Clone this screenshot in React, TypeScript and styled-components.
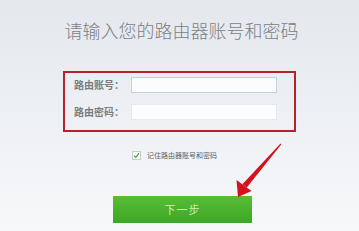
import React from 'react';
import styled, { createGlobalStyle } from 'styled-components';

const GlobalStyle = createGlobalStyle`
  html, body {
    margin: 0;
    padding: 0;
  }
  body {
    font-family: "Noto Sans CJK SC", "Noto Sans", sans-serif;
    background: #f4f6f8;
  }
`;

const Page = styled.div`
  position: relative;
  width: 359px;
  height: 231px;
  overflow: hidden;
  box-sizing: border-box;
  padding: 21px 0 0 63px;
  display: flex;
  flex-direction: column;
  align-items: flex-start;
  background: linear-gradient(180deg, #e4e8ee 0%, #eceff3 45%, #f7f8fa 100%);
`;

const Title = styled.h1`
  margin: 0;
  width: 237px;
  text-align: center;
  font-size: 18px;
  line-height: 18px;
  font-weight: 300;
  color: #7b7e83;
  white-space: nowrap;
`;

const FormBox = styled.div`
  margin-top: 32px;
  width: 233px;
  box-sizing: border-box;
  border: 2px solid #b5222c;
  padding: 4px 0 10px 9px;
  display: flex;
  flex-direction: column;
  gap: 11px;
`;

const Row = styled.div`
  display: flex;
  align-items: center;
  height: 16px;
`;

const Label = styled.span`
  width: 57px;
  font-size: 10px;
  line-height: 16px;
  font-weight: 700;
  color: #7a7d80;
  white-space: nowrap;
`;

const Input = styled.div<{ $strong?: boolean }>`
  width: 146px;
  height: 16px;
  box-sizing: border-box;
  background: #fbfcfd;
  border: 1px solid ${(p) => (p.$strong ? '#c5d0da' : '#e6eaee')};
`;

const Remember = styled.label`
  margin: 18px 0 0 69px;
  display: flex;
  align-items: center;
  gap: 6px;
  height: 10px;
  font-size: 7px;
  line-height: 10px;
  color: #5e6063;
  white-space: nowrap;
`;

const Check = styled.span`
  width: 9px;
  height: 9px;
  box-sizing: border-box;
  border: 1px solid #c6cbd0;
  background: #fff;
  display: flex;
  align-items: center;
  justify-content: center;
`;

const NextButton = styled.button`
  margin: 36px 0 0 50px;
  width: 139px;
  height: 27px;
  border: none;
  padding: 0;
  background: linear-gradient(180deg, #57bd35 0%, #47b02b 60%, #3ea626 100%);
  color: #cfeec2;
  font-family: "Noto Sans CJK SC", sans-serif;
  font-size: 11px;
  line-height: 27px;
  letter-spacing: 1px;
`;

const Arrow = styled.svg`
  position: absolute;
  left: 0;
  top: 0;
  pointer-events: none;
`;

export default function App() {
  return (
    <>
      <GlobalStyle />
      <Page>
        <Title>请输入您的路由器账号和密码</Title>
        <FormBox>
          <Row>
            <Label>路由账号：</Label>
            <Input $strong />
          </Row>
          <Row>
            <Label>路由密码：</Label>
            <Input />
          </Row>
        </FormBox>
        <Remember>
          <Check>
            <svg width="7" height="7" viewBox="0 0 7 7">
              <path d="M1 3.6 L2.8 5.4 L6 1.2" fill="none" stroke="#4a9a2e" strokeWidth="1.1" />
            </svg>
          </Check>
          记住路由器账号和密码
        </Remember>
        <NextButton>下一步</NextButton>
        <Arrow width="359" height="231" viewBox="0 0 359 231">
          <polygon points="280.5,143.5 281.2,144.6 246.8,187.6 242.4,184.2" fill="#d4121c" />
          <polygon points="236.5,180 251.5,191 238,197" fill="#d4121c" />
        </Arrow>
      </Page>
    </>
  );
}
